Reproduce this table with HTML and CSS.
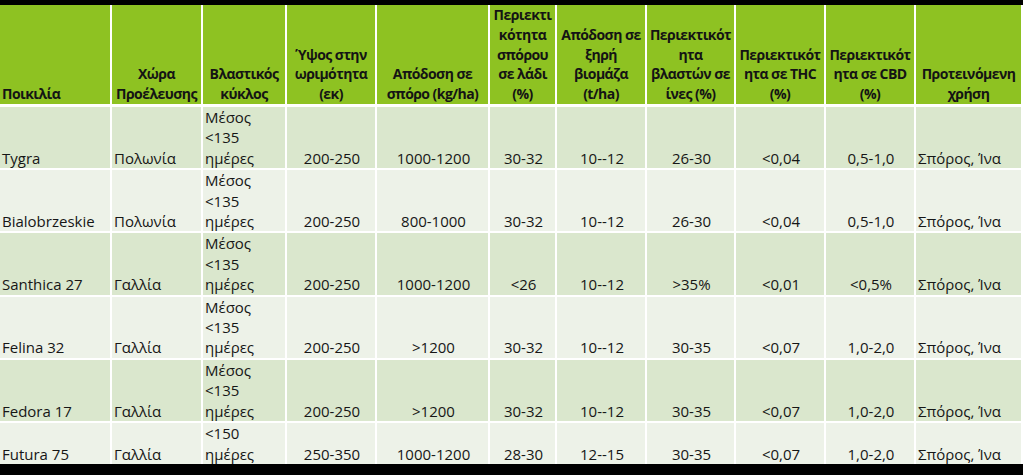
FILE: index.html
```html
<!DOCTYPE html>
<html lang="el">
<head>
<meta charset="utf-8">
<title>Ποικιλίες</title>
<link rel="stylesheet" href="styles.css">
</head>
<body>
<div class="frame">
<table class="grid">
  <colgroup>
    <col class="c1"><col class="c2"><col class="c3"><col class="c4"><col class="c5"><col class="c6"><col class="c7"><col class="c8"><col class="c9"><col class="c10"><col class="c11">
  </colgroup>
  <thead>
    <tr>
      <th class="left">Ποικιλία</th>
      <th>Χώρα<br>Προέλευσης</th>
      <th>Βλαστικός<br>κύκλος</th>
      <th>Ύψος στην<br>ωριμότητα<br>(εκ)</th>
      <th>Απόδοση σε<br>σπόρο (kg/ha)</th>
      <th>Περιεκτι<br>κότητα<br>σπόρου<br>σε λάδι<br>(%)</th>
      <th>Απόδοση σε<br>ξηρή<br>βιομάζα<br>(t/ha)</th>
      <th>Περιεκτικότ<br>ητα<br>βλαστών σε<br>ίνες (%)</th>
      <th>Περιεκτικότ<br>ητα σε THC<br>(%)</th>
      <th>Περιεκτικότ<br>ητα σε CBD<br>(%)</th>
      <th>Προτεινόμενη<br>χρήση</th>
    </tr>
  </thead>
  <tbody>
    <tr class="band1">
      <td class="left">Tygra</td><td class="left">Πολωνία</td><td class="left">Μέσος<br>&lt;135<br>ημέρες</td>
      <td>200-250</td><td>1000-1200</td><td>30-32</td><td>10--12</td><td>26-30</td><td>&lt;0,04</td><td>0,5-1,0</td><td class="left">Σπόρος, Ίνα</td>
    </tr>
    <tr class="band2">
      <td class="left">Bialobrzeskie</td><td class="left">Πολωνία</td><td class="left">Μέσος<br>&lt;135<br>ημέρες</td>
      <td>200-250</td><td>800-1000</td><td>30-32</td><td>10--12</td><td>26-30</td><td>&lt;0,04</td><td>0,5-1,0</td><td class="left">Σπόρος, Ίνα</td>
    </tr>
    <tr class="band1">
      <td class="left">Santhica 27</td><td class="left">Γαλλία</td><td class="left">Μέσος<br>&lt;135<br>ημέρες</td>
      <td>200-250</td><td>1000-1200</td><td>&lt;26</td><td>10--12</td><td>&gt;35%</td><td>&lt;0,01</td><td>&lt;0,5%</td><td class="left">Σπόρος, Ίνα</td>
    </tr>
    <tr class="band2">
      <td class="left">Felina 32</td><td class="left">Γαλλία</td><td class="left">Μέσος<br>&lt;135<br>ημέρες</td>
      <td>200-250</td><td>&gt;1200</td><td>30-32</td><td>10--12</td><td>30-35</td><td>&lt;0,07</td><td>1,0-2,0</td><td class="left">Σπόρος, Ίνα</td>
    </tr>
    <tr class="band1">
      <td class="left">Fedora 17</td><td class="left">Γαλλία</td><td class="left">Μέσος<br>&lt;135<br>ημέρες</td>
      <td>200-250</td><td>&gt;1200</td><td>30-32</td><td>10--12</td><td>30-35</td><td>&lt;0,07</td><td>1,0-2,0</td><td class="left">Σπόρος, Ίνα</td>
    </tr>
    <tr class="band2 last">
      <td class="left">Futura 75</td><td class="left">Γαλλία</td><td class="left">&lt;150<br>ημέρες</td>
      <td>250-350</td><td>1000-1200</td><td>28-30</td><td>12--15</td><td>30-35</td><td>&lt;0,07</td><td>1,0-2,0</td><td class="left">Σπόρος, Ίνα</td>
    </tr>
  </tbody>
</table>
</div>
</body>
</html>
```

FILE: styles.css
```css
html, body {
  margin: 0;
  padding: 0;
  background: #000;
}

.frame {
  width: 1023px;
  height: 475px;
  overflow: hidden;
  padding-top: 5px;
  box-sizing: border-box;
}

.grid {
  width: 1023px;
  table-layout: fixed;
  border-collapse: separate;
  border-spacing: 0;
  font-family: "Open Sans", "Noto Sans", sans-serif;
  font-size: 15px;
  color: #111;
}

.c1 { width: 112px; }
.c2 { width: 91px; }
.c3 { width: 84px; }
.c4 { width: 90px; }
.c5 { width: 113px; }
.c6 { width: 67px; }
.c7 { width: 90px; }
.c8 { width: 89px; }
.c9 { width: 90px; }
.c10 { width: 90px; }
.c11 { width: 107px; }

.grid th,
.grid td {
  padding: 0 0 0 2px;
  border-right: 2px solid #fff;
  border-bottom: 2px solid #fff;
  vertical-align: bottom;
  text-align: center;
  white-space: nowrap;
  overflow: hidden;
}

.grid th {
  background: #8ec222;
  font-weight: 700;
  font-size: 14px;
  letter-spacing: -0.55px;
  line-height: 19.8px;
  height: 99px;
  padding: 0;
  border-bottom-width: 3px;
  color: #141414;
}

.grid th.left {
  padding-left: 2px;
}

.grid td {
  line-height: 20.4px;
  height: 61px;
  font-weight: 400;
  color: #161616;
}

.grid .left {
  text-align: left;
}

.band1 td { background: #dae7cd; }
.band2 td { background: #edf2e8; }

.grid tr.last td {
  height: 41px;
  border-bottom: 0;
}
```
